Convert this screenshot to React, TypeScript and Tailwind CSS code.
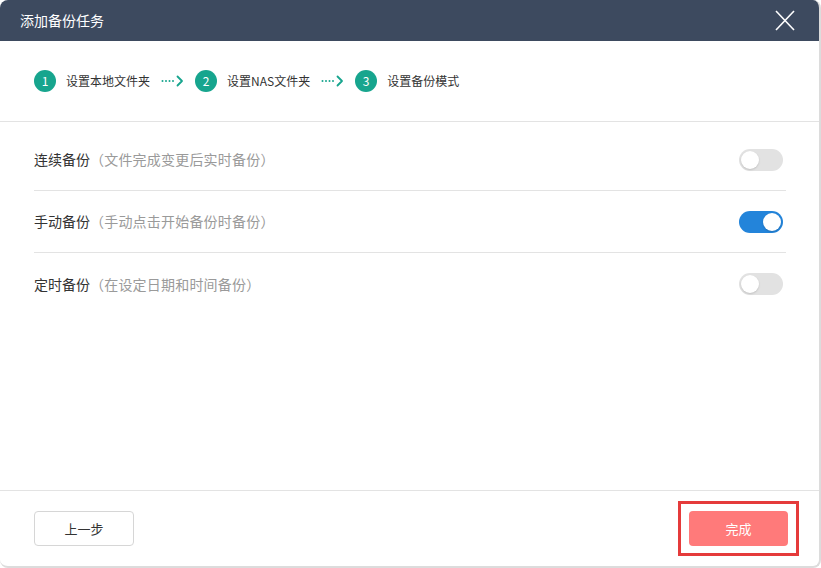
import { useState } from "react";

const FONT = { fontFamily: '"Noto Sans CJK SC", "Noto Sans", sans-serif' };

function StepArrow() {
  return (
    <svg width="23" height="12" viewBox="0 0 23 12" className="mx-[11px]">
      <circle cx="1.5" cy="6" r="1" fill="#17a58e" />
      <circle cx="5" cy="6" r="1" fill="#17a58e" />
      <circle cx="8.5" cy="6" r="1" fill="#17a58e" />
      <circle cx="12" cy="6" r="1" fill="#17a58e" />
      <polyline
        points="16.5,1.5 21,6 16.5,10.5"
        fill="none"
        stroke="#17a58e"
        strokeWidth="1.8"
        strokeLinecap="round"
        strokeLinejoin="round"
      />
    </svg>
  );
}

function Step({ n, label }: { n: number; label: string }) {
  return (
    <div className="flex items-center">
      <div className="w-[22px] h-[22px] rounded-full bg-[#17a58e] text-white text-[12px] flex items-center justify-center">
        {n}
      </div>
      <span className="ml-[10px] text-[12px] text-[#333]">{label}</span>
    </div>
  );
}

function Toggle({ on, onClick }: { on: boolean; onClick: () => void }) {
  return (
    <button
      onClick={onClick}
      className={`relative w-[44px] h-[22px] rounded-full mr-[3px] ${
        on ? "bg-[#2384da]" : "bg-[#e2e2e2]"
      }`}
    >
      <span
        className={`absolute top-[2px] w-[18px] h-[18px] rounded-full bg-white shadow-[0_1px_2px_rgba(0,0,0,0.15)] ${
          on ? "left-[24px]" : "left-[2px]"
        }`}
      />
    </button>
  );
}

export default function App() {
  const [modes, setModes] = useState([false, true, false]);

  const rows = [
    { title: "连续备份", desc: "（文件完成变更后实时备份）" },
    { title: "手动备份", desc: "（手动点击开始备份时备份）" },
    { title: "定时备份", desc: "（在设定日期和时间备份）" },
  ];

  return (
    <div className="w-[821px] h-[568px] bg-white" style={FONT}>
      <div className="w-full h-full flex flex-col rounded-lg overflow-hidden border-r-2 border-b-2 border-[#dcdcdc] bg-white">
        {/* HEADER */}
        <div className="h-[41px] shrink-0 bg-[#3d4a5f] flex items-center justify-between pl-[20px] pr-[24px]">
          <span className="text-white text-[14px]">添加备份任务</span>
          <svg width="20" height="21" viewBox="0 0 20 21">
            <line x1="1" y1="1" x2="19" y2="20" stroke="#fff" strokeWidth="1.6" />
            <line x1="19" y1="1" x2="1" y2="20" stroke="#fff" strokeWidth="1.6" />
          </svg>
        </div>

        {/* STEPS */}
        <div className="h-[81px] shrink-0 flex items-center px-[34px] border-b border-[#e3e3e3]">
          <Step n={1} label="设置本地文件夹" />
          <StepArrow />
          <Step n={2} label="设置NAS文件夹" />
          <StepArrow />
          <Step n={3} label="设置备份模式" />
        </div>

        {/* MODES */}
        <div className="flex-1 pt-[7px] pl-[34px] pr-[33px]">
          {rows.map((r, i) => (
            <div
              key={r.title}
              className={`h-[62px] flex items-center justify-between ${
                i < rows.length - 1 ? "border-b border-[#e3e3e3]" : ""
              }`}
            >
              <div className="text-[14px]">
                <span className="text-[#333]">{r.title}</span>
                <span className="text-[#9a9a9a] tracking-[0.2px]">{r.desc}</span>
              </div>
              <Toggle
                on={modes[i]}
                onClick={() => setModes(modes.map((m, j) => (j === i ? !m : m)))}
              />
            </div>
          ))}
        </div>

        {/* FOOTER */}
        <div className="h-[76px] shrink-0 border-t border-[#e3e3e3] flex items-center justify-between pl-[34px] pr-[20px]">
          <button className="w-[100px] h-[35px] rounded-[4px] border border-[#d6d6d6] text-[13px] text-[#333] bg-white">
            上一步
          </button>
          <div className="border-[3px] border-[#e53b3b] px-[8px] py-[7px]">
            <button className="w-[99px] h-[35px] rounded-[4px] bg-[#ff7a7a] text-[13px] text-white">
              完成
            </button>
          </div>
        </div>
      </div>
    </div>
  );
}
